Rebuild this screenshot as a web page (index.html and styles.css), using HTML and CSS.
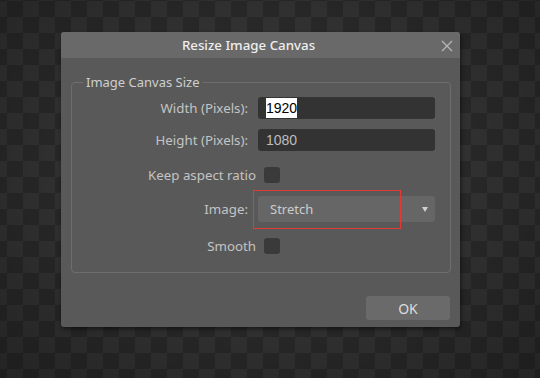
FILE: index.html
```html
<!DOCTYPE html>
<html lang="en">
<head>
    <meta charset="UTF-8">
    <meta name="viewport" content="width=device-width, initial-scale=1.0">
    <title>Resize Image Canvas</title>
    <link rel="stylesheet" href="styles.css">
</head>
<body>
    <div class="dialog">
        <div class="titlebar">
            <span class="title">Resize Image Canvas</span>
            <svg class="close" width="12" height="12" viewBox="0 0 12 12">
                <path d="M1 1 L11 11 M11 1 L1 11" stroke="#b4b4b4" stroke-width="1.4" fill="none"/>
            </svg>
        </div>

        <fieldset class="group">
            <legend>Image Canvas Size</legend>
            <div class="form">
                <div class="row r1">
                    <label>Width (Pixels):</label>
                    <div class="input"><span class="sel">1920</span></div>
                </div>
                <div class="row r2">
                    <label>Height (Pixels):</label>
                    <div class="input">1080</div>
                </div>
                <div class="row r3">
                    <label>Keep aspect ratio</label>
                    <div class="check"></div>
                </div>
                <div class="row r4">
                    <label>Image:</label>
                    <div class="select">
                        <span>Stretch</span>
                        <span class="arrow"></span>
                        <div class="highlight"></div>
                    </div>
                </div>
                <div class="row r5">
                    <label>Smooth</label>
                    <div class="check"></div>
                </div>
            </div>
        </fieldset>

        <div class="footer">
            <button class="btn">OK</button>
        </div>
    </div>
</body>
</html>
```

FILE: styles.css
```css
html, body {
    height: 100%;
}
body {
    margin: 0;
    padding: 32px 0 0 61px;
    box-sizing: border-box;
    font-family: "Noto Sans", "Open Sans", sans-serif;
    font-size: 13px;
    background:
        radial-gradient(ellipse at 50% 45%, rgba(0,0,0,0) 35%, rgba(0,0,0,0.32) 100%),
        conic-gradient(#353535 25%, #2b2b2b 0 50%, #353535 0 75%, #2b2b2b 0) 7px 1px / 32px 32px;
    overflow: hidden;
}
.dialog {
    width: 399px;
    height: 295px;
    background-color: #595959;
    border-radius: 3px;
    box-shadow: 1px 2px 4px rgba(0,0,0,0.5);
    display: flex;
    flex-direction: column;
}
.titlebar {
    position: relative;
    height: 26px;
    padding-right: 24px;
    background-color: #696969;
    border-radius: 3px 3px 0 0;
    display: flex;
    align-items: center;
    justify-content: center;
}
.title {
    color: #eeeeee;
    font-weight: 500;
    font-size: 13.3px;
}
.close {
    position: absolute;
    right: 7px;
    top: 8px;
}
/* group box */
.group {
    margin: 15px 10px 0 10px;
    padding: 0 15px 0 11px;
    border: 1px solid #6e6e6e;
    border-radius: 4px;
    height: 200px;
    box-sizing: border-box;
}
.group legend {
    color: #cfcfcf;
    padding: 0 3px;
    font-size: 13px;
    line-height: 18px;
}
.form {
    display: flex;
    flex-direction: column;
    padding-top: 1px;
}
.row {
    display: grid;
    grid-template-columns: 165px 177px;
    column-gap: 10px;
    align-items: center;
}
.r1, .r2 { height: 32px; }
.r3 { height: 38px; }
.r4 { height: 30px; }
.r5 { height: 44px; }
.row label {
    color: #c4c4c4;
    text-align: right;
    font-size: 13.3px;
}
.r3 label, .r5 label {
    margin-right: -8px;
}
.input {
    height: 22px;
    background-color: #333333;
    border-radius: 3px;
    color: #bdbdbd;
    font-family: "Liberation Sans", Arial, sans-serif;
    font-size: 14px;
    line-height: 22px;
    padding-left: 8px;
}
.sel {
    background-color: #ffffff;
    color: #000000;
    padding: 2px 0;
}
.check {
    width: 16px;
    height: 16px;
    margin-left: 6px;
    background-color: #3a3a3a;
    border-radius: 3px;
}
.select {
    position: relative;
    height: 26px;
    background-color: #666666;
    border-radius: 3px;
    color: #cccccc;
    line-height: 26px;
    padding-left: 12px;
}
.arrow {
    position: absolute;
    right: 7px;
    top: 11px;
    border-left: 3px solid transparent;
    border-right: 3px solid transparent;
    border-top: 5px solid #d0d0d0;
}
.highlight {
    position: absolute;
    left: -5px;
    top: -6px;
    width: 146px;
    height: 37px;
    border: 1px solid #e53935;
}
.footer {
    display: flex;
    justify-content: flex-end;
    padding: 23px 10px 0 0;
}
.btn {
    width: 84px;
    height: 24px;
    background-color: #6a6a6a;
    border: none;
    border-radius: 3px;
    color: #dddddd;
    font-family: inherit;
    font-size: 14px;
}
```
